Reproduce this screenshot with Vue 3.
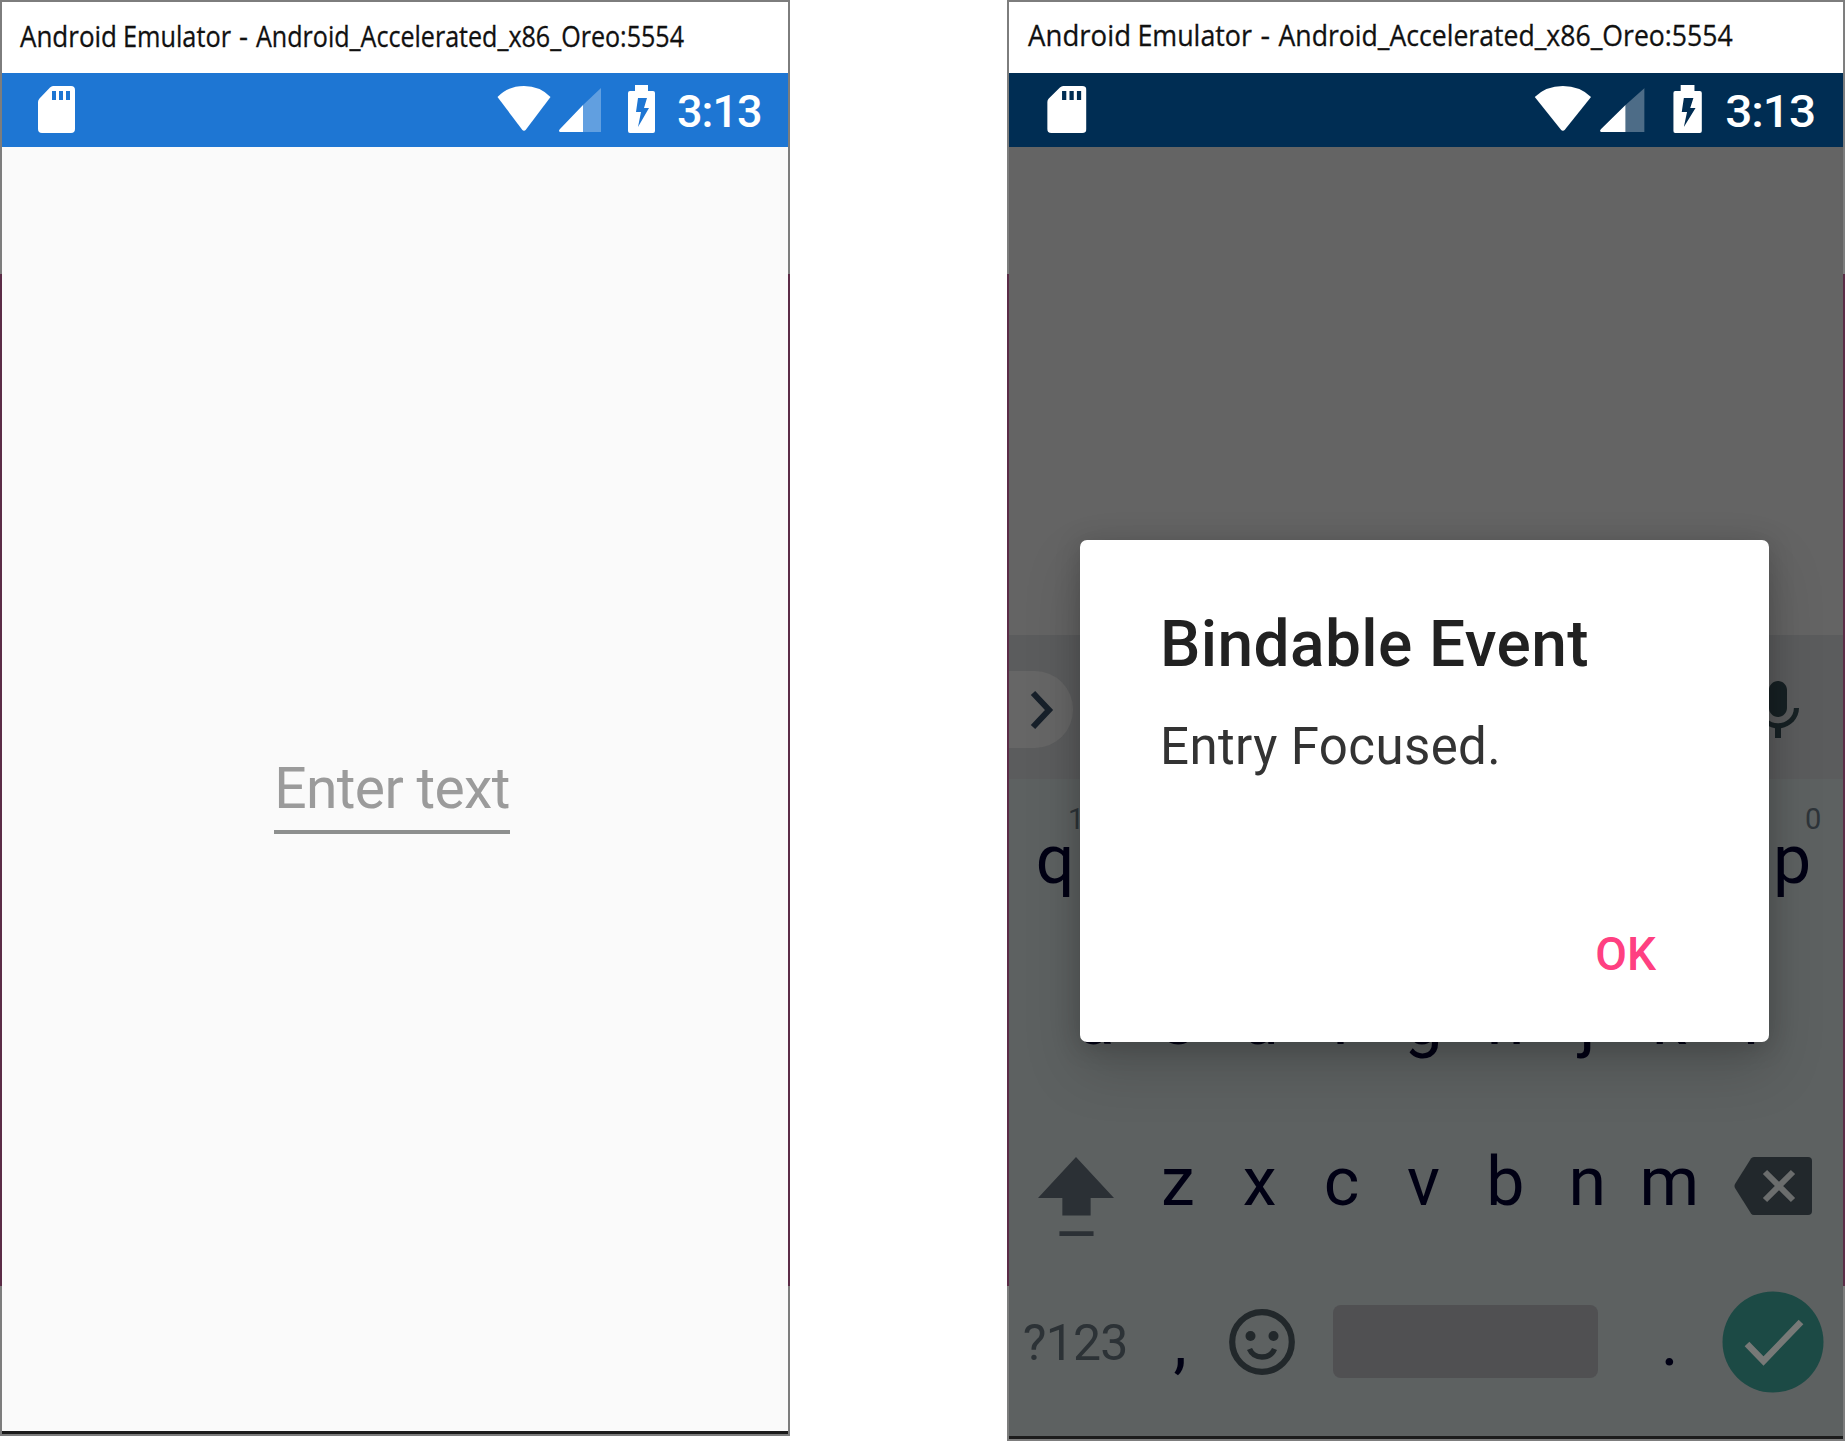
<script setup>
const titleWords = [
  { t: 'Android', x: 18, w: 97 },
  { t: 'Emulator', x: 121, w: 108 },
  { t: '-', x: 237, w: 9 },
  { t: 'Android_Accelerated_x86_Oreo:5554', x: 254, w: 428 }
]
// the keys between q and p lie under the dialog
const row1 = [
  { k: 'q', n: 1 },
  ...Array.from({ length: 8 }, () => ({ k: '' })),
  { k: 'p', n: 0 }
]
const row2 = 'asdfghjkl'.split('')
const row3 = 'zxcvbnm'.split('')
const phones = ['plain', 'dimmed']
</script>

<template>
  <main class="stage">
    <section v-for="p in phones" :key="p" class="phone" :class="p">
      <header class="head">
        <div class="titlebar">
          <svg width="788" height="70" viewBox="0 0 788 70">
            <text v-for="w in titleWords" :key="w.x" :x="w.x" y="44.500" :textLength="w.w" lengthAdjust="spacingAndGlyphs">{{ w.t }}</text>
          </svg>
        </div>
        <div class="status">
          <svg class="sd" width="37" height="47" viewBox="0 0 37 47">
            <path fill="#fff" fill-rule="evenodd" d="M15 0H33Q37 0 37 4V43Q37 47 33 47H4Q0 47 0 43V16Q0 14 1.500 12.500L12 1.500Q13.500 0 15 0ZM14 5V14H18V5ZM21 5V14H25V5ZM28 5V14H32V5Z" />
          </svg>
          <div class="tray">
            <svg class="wifi" width="54" height="45" viewBox="0 0 54 45">
              <path fill="#fff" d="M0.500 11Q11 0 27 0T53.500 11L29 43.500Q27 46 25 43.500Z" />
            </svg>
            <svg class="signal" width="42" height="44" viewBox="0 0 42 44">
              <path fill="#fff" fill-opacity=".3" d="M24 17L42 0V44H24Z" />
              <path fill="#fff" d="M24 17V44H1Q-1 43 1 41Z" />
            </svg>
            <svg class="battery" width="27" height="48" viewBox="0 0 27 48">
              <path fill="#fff" fill-rule="evenodd" d="M7 0H20V6H25Q27 6 27 8V46Q27 48 25 48H2Q0 48 0 46V8Q0 6 2 6H7ZM10 13L8 27H13L10 42L21 23H16L19 13Z" />
            </svg>
            <span class="clock">3:13</span>
          </div>
        </div>
      </header>

      <div v-if="p === 'plain'" class="page">
        <div class="entry">Enter text</div>
      </div>

      <div v-else class="page">
        <div class="suggest">
          <div class="pill">
            <svg width="24" height="42" viewBox="0 0 24 42"><path d="M3 4L19 21L3 38" fill="none" stroke="#17202a" stroke-width="6" /></svg>
          </div>
          <svg class="mic" width="72" height="72" viewBox="0 0 24 24">
            <path fill="#172124" d="M12 14c1.660 0 2.990-1.340 2.990-3L15 5c0-1.660-1.340-3-3-3S9 3.340 9 5v6c0 1.660 1.340 3 3 3zm5.300-3c0 3-2.540 5.100-5.300 5.100S6.700 14 6.700 11H5c0 3.410 2.720 6.230 6 6.720V21h2v-3.280c3.280-.48 6-3.300 6-6.720h-1.700z" />
          </svg>
        </div>
        <div class="keyboard">
          <div class="row">
            <div v-for="(c, i) in row1" :key="i" class="key">{{ c.k }}<small v-if="c.k">{{ c.n }}</small></div>
          </div>
          <div class="row inset">
            <div v-for="c in row2" :key="c" class="key">{{ c }}</div>
          </div>
          <div class="row">
            <div class="key wide">
              <svg width="76" height="80" viewBox="0 0 78 82" class="shift" preserveAspectRatio="none">
                <path fill="#2b3035" d="M39 0L78 42H54V60H25V42H0ZM22 76H57V81H22Z" />
              </svg>
            </div>
            <div v-for="c in row3" :key="c" class="key">{{ c }}</div>
            <div class="key wide">
              <svg width="78" height="58" viewBox="0 0 78 58" class="back">
                <path fill="#22282c" d="M20 0H74Q78 0 78 4V54Q78 58 74 58H20Q18 58 17 56.500L1 31Q0 29 1 27L17 1.500Q18 0 20 0Z" />
                <path d="M31 15L59 43M59 15L31 43" stroke="#6b6d6d" stroke-width="6" />
              </svg>
            </div>
          </div>
          <div class="row last">
            <div class="key wide sym">?123</div>
            <div class="key comma">,</div>
            <div class="key">
              <svg width="66" height="66" viewBox="0 0 66 66">
                <circle cx="33" cy="33" r="29.800" fill="none" stroke="#22282b" stroke-width="6.200" />
                <circle cx="21.500" cy="27" r="5" fill="#22282b" />
                <circle cx="44.500" cy="27" r="5" fill="#22282b" />
                <path d="M20.500 40Q24 48 33 48T45.500 40" fill="none" stroke="#22282b" stroke-width="5.500" />
              </svg>
            </div>
            <div class="key space"><i></i></div>
            <div class="key">.</div>
            <div class="key wide">
              <svg class="done" width="102" height="102" viewBox="0 0 102 102">
                <circle cx="51" cy="51" r="50.500" fill="#1c4a45" />
                <path d="M25 53L41.500 70L79 31" fill="none" stroke="#777977" stroke-width="6.500" />
              </svg>
            </div>
          </div>
        </div>
        <div class="dialog">
          <h1>Bindable Event</h1>
          <p>Entry Focused.</p>
          <button>OK</button>
        </div>
      </div>
      <div class="foot"></div>
    </section>
  </main>
</template>

<style>
body { margin: 0; background: #fff; }
</style>

<style scoped>
.stage { width: 1845px; height: 1441px; display: flex; justify-content: space-between; align-items: flex-start; font-family: Roboto, sans-serif; overflow: hidden; }
.phone { box-sizing: border-box; display: flex; flex-direction: column; border: 2px solid; border-image: linear-gradient(#7d7d7d 0 274px, #5b2c47 274px 1286px, #7d7d7d 1286px) 2; }
.plain { width: 790px; height: 1436px; background: #fafafa; }
.dimmed { width: 838px; height: 1441px; background: #646464; }
.head { width: 786px; flex: none; transform-origin: 0 0; }
.dimmed .head { transform: scaleX(1.0611); }
.titlebar { height: 71px; background: #fff; overflow: hidden; }
.titlebar svg { display: block; }
.titlebar text { font: 28.5px "Open Sans", "Noto Sans", sans-serif; fill: #111; stroke: #111; stroke-width: .3px; }
.status { height: 74px; background: #1e76d3; display: flex; justify-content: space-between; align-items: flex-start; }
.dimmed .status { background: #002d53; }
.sd { margin: 13px 0 0 36px; }
.tray { display: flex; align-items: flex-start; padding-right: 28px; }
.wifi { margin-top: 13px; }
.signal { margin: 15px 0 0 8px; }
.battery { margin: 12px 0 0 27px; }
.clock { margin: 12px 0 0 22px; width: 83px; white-space: nowrap; font-size: 45px; font-weight: 500; line-height: 53px; letter-spacing: -1px; color: #fff; }
.page { position: relative; flex: 1; display: flex; flex-direction: column; }
.plain .page { align-items: center; }
.entry { box-sizing: border-box; width: 236px; height: 84px; margin: 603px 6px 0 0; border-bottom: 4px solid #8d8f8e; font-size: 57px; line-height: 78px; letter-spacing: -.65px; color: #9b9b9b; white-space: nowrap; text-align: center; }
.foot { height: 3px; flex: none; background: #1c1c1c; }
.suggest { height: 144px; flex: none; margin-top: 488px; background: #5b5c5d; display: flex; justify-content: space-between; align-items: flex-start; }
.pill { box-sizing: border-box; width: 64px; height: 77px; margin-top: 36px; padding-left: 21px; border-radius: 0 38px 38px 0; background: #666; display: flex; align-items: center; }
.mic { margin: 40px 29px 0 0; }
.keyboard { flex: 1; background: #5d6161; padding: 0 10px 0 5px; }
.row { height: 161px; display: flex; }
.inset { padding: 0 41px; }
.key { position: relative; flex: 1 1 0; min-width: 0; display: flex; justify-content: center; align-items: center; font-size: 68px; line-height: 80px; color: #000014; }
.key small { position: absolute; left: calc(50% + 13px); top: 22px; font-size: 29px; line-height: 36px; color: #2e3439; }
.wide { flex-grow: 1.5; }
.space { flex-grow: 4; }
.space i { width: 265px; height: 73px; border-radius: 8px; background: #505052; }
.sym { font-size: 50px; letter-spacing: -.8px; color: #2c3236; padding-top: 2px; }
.last { height: 159px; }
.comma { padding-left: 3px; }
.shift { margin: 30px 0 0 1px; }
.back { margin: 9px 0 0 3px; }
.done { margin-left: 2px; }
.dialog { position: absolute; left: 71px; top: 393px; width: 689px; height: 502px; box-sizing: border-box; padding: 67px 83px 0 80px; border-radius: 7px; background: #fff; box-shadow: 0 26px 56px rgba(0, 0, 0, .17), 0 4px 26px rgba(0, 0, 0, .18); display: flex; flex-direction: column; }
h1 { margin: 0; font-size: 64px; line-height: 76px; font-weight: 500; letter-spacing: .4px; color: #212121; white-space: nowrap; }
p { margin: 34px 0 0; font-size: 51px; line-height: 60px; letter-spacing: .4px; color: #333; white-space: nowrap; }
button { margin: 150px 30px 0 0; padding: 0; align-self: flex-end; border: 0; background: none; font: 500 46px/54px Roboto, sans-serif; color: #ff4081; }
</style>
